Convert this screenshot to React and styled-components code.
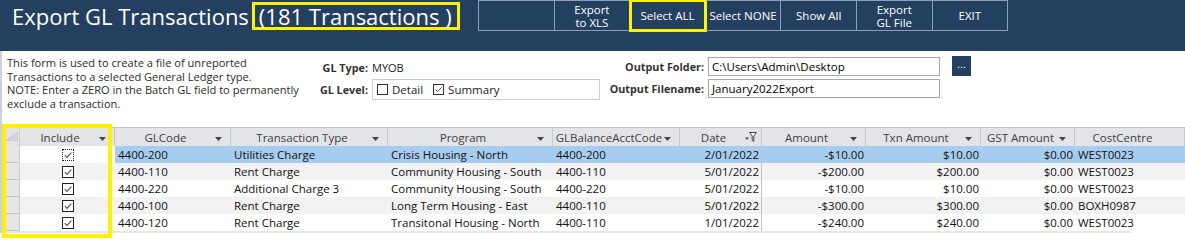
import styled, { createGlobalStyle, css } from 'styled-components';

const GlobalStyle = createGlobalStyle`
  html, body {
    margin: 0;
    padding: 0;
    background: #fff;
  }
  body {
    font-family: "Open Sans", "Noto Sans", sans-serif;
    width: 1185px;
    height: 242px;
    overflow: hidden;
  }
`;

const NAVY = '#244061';
const YELLOW = '#fff200';

const TopBar = styled.div`
  display: flex;
  align-items: flex-start;
  height: 51px;
  background: ${NAVY};
  color: #fff;
`;
const Title = styled.h1`
  display: flex;
  align-items: center;
  width: 466px;
  margin: 0;
  padding: 2px 0 0 12px;
  font-size: 22px;
  font-weight: 400;
  line-height: 26px;
  white-space: nowrap;
`;
const Count = styled.span`
  margin-left: 3px;
  padding: 0 5px 0 4px;
  border: 3px solid ${YELLOW};
  line-height: 22px;
`;
const ButtonBar = styled.div`
  display: flex;
  border-left: 1px solid #8d9fb8;
`;
const BarButton = styled.button`
  width: 75.6px;
  height: 31px;
  padding: 0;
  border: 1px solid #8d9fb8;
  border-left: none;
  background: transparent;
  color: #fff;
  font-family: "Open Sans", sans-serif;
  font-size: 11.5px;
  line-height: 13px;
  white-space: pre-line;
  ${(p) =>
    p.$highlight &&
    css`
      outline: 3px solid ${YELLOW};
      outline-offset: -2px;
    `}
`;

const Body = styled.div`
  border-left: 2px solid #c9d2e2;
`;
const FormArea = styled.div`
  display: flex;
  height: 76px;
  box-sizing: border-box;
  padding: 5px 0 0 5px;
`;
const Description = styled.p`
  width: 311px;
  margin: 0;
  font-size: 11.1px;
  line-height: 13.5px;
  color: #2b2b2b;
  white-space: nowrap;
`;
const FieldGrid = styled.div`
  display: grid;
  grid-template-columns: ${(p) => p.$columns};
  grid-auto-rows: 20px;
  column-gap: 4px;
  row-gap: 2px;
  align-items: center;
  align-content: start;
  margin-top: 1px;
`;
const OutputGrid = styled(FieldGrid)`
  margin-top: 0;
  margin-left: 9px;
`;
const Label = styled.div`
  font-size: 10.8px;
  font-weight: 700;
  color: #333;
  text-align: right;
  white-space: nowrap;
`;
const Value = styled.div`
  font-size: 11px;
  color: #222;
`;
const OptionBox = styled.div`
  display: flex;
  align-items: center;
  gap: 4px;
  height: 19px;
  padding-left: 4px;
  border: 1px solid #cfcfcf;
  font-size: 11.5px;
  color: #222;
`;
const OptionLabel = styled.span`
  margin-right: 6px;
`;
const TextInput = styled.div`
  box-sizing: border-box;
  height: 19px;
  padding: 0 3px;
  border: 1px solid #a6a6a6;
  font-size: 11.5px;
  line-height: 17px;
  color: #000;
`;
const BrowseButton = styled.button`
  width: 19px;
  height: 20px;
  margin-left: 8px;
  padding: 0 0 4px;
  border: none;
  background: ${NAVY};
  color: #fff;
  font-size: 11px;
  line-height: 1;
`;
const FormBox = styled.span`
  display: inline-flex;
  align-items: center;
  justify-content: center;
  box-sizing: border-box;
  width: 11px;
  height: 11px;
  border: 1px solid #333;
  background: #fff;
`;

const GridWrap = styled.div`
  position: relative;
  margin-left: 1px;
`;
const Highlight = styled.div`
  position: absolute;
  left: -1px;
  top: -3px;
  width: 110px;
  height: 114px;
  box-sizing: border-box;
  border: 4px solid ${YELLOW};
  pointer-events: none;
`;
const Row = styled.div`
  display: grid;
  grid-template-columns: ${(p) => p.$template};
  height: ${(p) => (p.$head ? 18 : 17)}px;
  background: ${(p) => (p.$head ? '#e2e4e8' : p.$selected ? '#a6cdef' : p.$stripe ? '#f2f2f2' : '#fff')};
  ${(p) => p.$head && 'border-top: 1px solid #c3c5c9;'}
  font-size: 11.5px;
  color: #111;
`;
const HeadCell = styled.div`
  position: relative;
  display: flex;
  align-items: center;
  justify-content: center;
  padding-right: 14px;
  border-right: 1px solid #c8cacd;
  color: #404040;
  white-space: nowrap;
  overflow: hidden;
`;
const SortArrow = styled.svg`
  position: absolute;
  right: 8px;
  top: 9px;
`;
const Selector = styled.div`
  box-sizing: border-box;
  background: #e6e6e6;
  border-right: 1px solid #cdcdcd;
  border-bottom: 1px solid #c4c4c4;
`;
const CornerSelector = styled(Selector)`
  display: flex;
  align-items: flex-end;
  padding: 0 0 5px 2px;
  background: #e2e4e8;
  border-bottom: none;
`;
const Cell = styled.div`
  padding: 0 2px 0 3px;
  line-height: 17px;
  text-align: ${(p) => p.$align || 'left'};
  white-space: nowrap;
  overflow: hidden;
  ${(p) => p.$divider && 'border-right: 1px solid #c3c3c3;'}
`;
const CheckCell = styled.div`
  display: flex;
  align-items: center;
  justify-content: center;
  background: ${(p) => (p.$stripe ? '#f2f2f2' : '#fff')};
`;
const GridBox = styled.span`
  display: inline-flex;
  align-items: center;
  justify-content: center;
  box-sizing: border-box;
  width: 12px;
  height: 12px;
  border: 1px ${(p) => (p.$focus ? 'dotted' : 'solid')} #222;
  background: #fff;
`;
const BottomEdge = styled.div`
  width: 1128px;
  height: 2px;
  background: #e6e6e6;
`;

const columns = [
  { key: 'include', label: 'Include', width: 95 },
  { key: 'glCode', label: 'GLCode', width: 116 },
  { key: 'type', label: 'Transaction Type', width: 157 },
  { key: 'program', label: 'Program', width: 165 },
  { key: 'balance', label: 'GLBalanceAcctCode', width: 127 },
  { key: 'date', label: 'Date', width: 82, align: 'right', filter: true },
  { key: 'amount', label: 'Amount', width: 104, align: 'right' },
  { key: 'txn', label: 'Txn Amount', width: 115, align: 'right' },
  { key: 'gst', label: 'GST Amount', width: 94, align: 'right' },
  { key: 'cost', label: 'CostCentre', width: 110, plain: true },
];

const rows = [
  { glCode: '4400-200', type: 'Utilities Charge', program: 'Crisis Housing - North', balance: '4400-200', date: '2/01/2022', amount: '-$10.00', txn: '$10.00', gst: '$0.00', cost: 'WEST0023' },
  { glCode: '4400-110', type: 'Rent Charge', program: 'Community Housing - South', balance: '4400-110', date: '5/01/2022', amount: '-$200.00', txn: '$200.00', gst: '$0.00', cost: 'WEST0023' },
  { glCode: '4400-220', type: 'Additional Charge 3', program: 'Community Housing - South', balance: '4400-220', date: '5/01/2022', amount: '-$10.00', txn: '$10.00', gst: '$0.00', cost: 'WEST0023' },
  { glCode: '4400-100', type: 'Rent Charge', program: 'Long Term Housing - East', balance: '4400-110', date: '5/01/2022', amount: '-$300.00', txn: '$300.00', gst: '$0.00', cost: 'BOXH0987' },
  { glCode: '4400-120', type: 'Rent Charge', program: 'Transitonal Housing - North', balance: '4400-110', date: '1/01/2022', amount: '-$240.00', txn: '$240.00', gst: '$0.00', cost: 'WEST0023' },
];

const template = ['17px', ...columns.map((c) => `${c.width}px`)].join(' ');

const buttons = [
  { label: '' },
  { label: 'Export\nto XLS' },
  { label: 'Select ALL', highlight: true },
  { label: 'Select NONE' },
  { label: 'Show All' },
  { label: 'Export\nGL File' },
  { label: 'EXIT' },
];

const Tick = ({ size = 12 }) => (
  <svg width={size - 2} height={size - 2} viewBox="0 0 10 10">
    <path d="M1.8 5.2 L4 7.4 L8.4 2.6" fill="none" stroke="#555" strokeWidth="1.1" />
  </svg>
);

const Arrow = () => (
  <SortArrow width="7" height="4" viewBox="0 0 7 4">
    <path d="M0 0 H7 L3.5 4 Z" fill="#444" />
  </SortArrow>
);

const FilterIcon = () => (
  <SortArrow width="12" height="10" viewBox="0 0 12 10" style={{ top: 4, right: 4 }}>
    <path d="M0 5.5 H4 L2 8 Z" fill="#444" />
    <path d="M4.5 0.5 H11.5 L8.8 4 V9.5 L7.2 8.3 V4 Z" fill="#fff" stroke="#444" strokeWidth="1" />
  </SortArrow>
);

const GridHeader = () => (
  <Row $head $template={template}>
    <CornerSelector>
      <svg width="13" height="9" viewBox="0 0 13 9">
        <path d="M13 0 V9 H0 Z" fill="#d3d5d9" stroke="#c2c4c8" strokeWidth="0.8" />
      </svg>
    </CornerSelector>
    {columns.map((c) => (
      <HeadCell key={c.key}>
        {c.label}
        {c.filter ? <FilterIcon /> : !c.plain && <Arrow />}
      </HeadCell>
    ))}
  </Row>
);

const GridRow = ({ row, index }) => {
  const stripe = index % 2 === 1;
  return (
    <Row $template={template} $selected={index === 0} $stripe={stripe}>
      <Selector />
      <CheckCell $stripe={stripe}>
        <GridBox $focus={index === 0}>
          <Tick />
        </GridBox>
      </CheckCell>
      {columns.slice(1).map((c) => (
        <Cell key={c.key} $align={c.align} $divider={c.key === 'date'}>
          {row[c.key]}
        </Cell>
      ))}
    </Row>
  );
};

const App = () => (
  <>
    <GlobalStyle />
    <TopBar>
      <Title>
        Export GL Transactions
        <Count>(181 Transactions )</Count>
      </Title>
      <ButtonBar>
        {buttons.map((b, i) => (
          <BarButton key={i} type="button" $highlight={b.highlight}>
            {b.label}
          </BarButton>
        ))}
      </ButtonBar>
    </TopBar>
    <Body>
      <FormArea>
        <Description>
          This form is used to create a file of unreported
          <br />
          Transactions to a selected General Ledger type.
          <br />
          NOTE: Enter a ZERO in the Batch GL field to permanently
          <br />
          exclude a transaction.
        </Description>
        <FieldGrid $columns="50px 228px">
          <Label>GL Type:</Label>
          <Value>MYOB</Value>
          <Label>GL Level:</Label>
          <OptionBox>
            <FormBox />
            <OptionLabel>Detail</OptionLabel>
            <FormBox>
              <Tick size={11} />
            </FormBox>
            <OptionLabel>Summary</OptionLabel>
          </OptionBox>
        </FieldGrid>
        <OutputGrid $columns="95px 232px 27px">
          <Label>Output Folder:</Label>
          <TextInput>C:\Users\Admin\Desktop</TextInput>
          <BrowseButton type="button">...</BrowseButton>
          <Label>Output Filename:</Label>
          <TextInput>January2022Export</TextInput>
        </OutputGrid>
      </FormArea>
      <GridWrap>
        <Highlight />
        <GridHeader />
        {rows.map((row, i) => (
          <GridRow key={i} row={row} index={i} />
        ))}
        <BottomEdge />
      </GridWrap>
    </Body>
  </>
);

export default App;
